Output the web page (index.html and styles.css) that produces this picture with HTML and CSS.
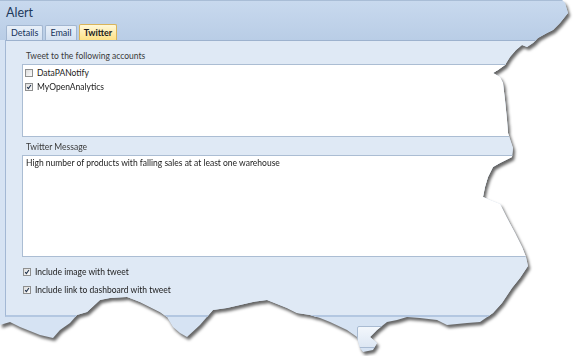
FILE: index.html
```html
<!doctype html>
<html>
<head>
<meta charset="utf-8">
<title>Alert</title>
<link rel="stylesheet" href="styles.css">
</head>
<body>
<div class="shot">
  <div class="window">
    <div class="head">
      <div class="title">Alert</div>
      <div class="tabs">
        <span class="tab">Details</span>
        <span class="tab">Email</span>
        <span class="tab on">Twitter</span>
      </div>
    </div>
    <div class="panel">
      <div class="label">Tweet to the following accounts</div>
      <div class="box list">
        <div class="item"><span class="check"></span>DataPANotify</div>
        <div class="item"><span class="check"><svg viewBox="0 0 8 8"><path d="M1.6 4.2 L3.2 6.2 L6.6 1.4"/></svg></span>MyOpenAnalytics</div>
      </div>
      <div class="label">Twitter Message</div>
      <div class="box msg">High number of products with falling sales at at least one warehouse</div>
      <div class="opts">
        <div class="item"><span class="check"><svg viewBox="0 0 8 8"><path d="M1.6 4.2 L3.2 6.2 L6.6 1.4"/></svg></span>Include image with tweet</div>
        <div class="item"><span class="check"><svg viewBox="0 0 8 8"><path d="M1.6 4.2 L3.2 6.2 L6.6 1.4"/></svg></span>Include link to dashboard with tweet</div>
      </div>
    </div>
    <div class="foot">
      <button class="btn">OK</button>
      <button class="btn">Cancel</button>
    </div>
  </div>
</div>
</body>
</html>
```

FILE: styles.css
```css
*{margin: 0;padding: 0;box-sizing: border-box;}
body{
	background: #FFFFFF;
	font-family: "Lato", "Noto Sans", sans-serif;
	font-size: 8.5px;
	color: #1b1b1b;
	overflow: hidden;
}
.shot{
	width: 573px;
	height: 356px;
	filter: drop-shadow(2px 3px 1.5px rgba(0,0,0,.6));
}
.window{
	width: 573px;
	height: 356px;
	background: #d6e3f3;
	clip-path: polygon(0 0, 562px 0, 565px 3px, 568px 13px, 560px 23px, 553px 30px, 547px 33px, 538px 38px, 533px 43px, 527px 47px, 522px 45px, 516px 50px, 510px 57px, 505px 65px, 498px 70px, 493px 73px, 500px 77px, 503px 83px, 505px 100px, 507px 120px, 508px 133px, 513px 148px, 512px 157px, 500px 163px, 493px 167px, 488px 177px, 485px 187px, 483px 197px, 490px 200px, 500px 204px, 507px 218px, 515px 233px, 522px 247px, 526px 257px, 528px 266px, 520px 278px, 512px 288px, 502px 303px, 493px 313px, 480px 322px, 467px 323px, 447px 325px, 437px 320px, 420px 318px, 407px 317px, 397px 320px, 387px 322px, 377px 330px, 370px 337px, 377px 343px, 373px 350px, 363px 352px, 360px 348px, 357px 337px, 347px 330px, 330px 322px, 320px 318px, 310px 315px, 297px 313px, 287px 308px, 267px 300px, 253px 302px, 240px 305px, 227px 308px, 213px 310px, 200px 325px, 187px 337px, 180px 333px, 173px 327px, 167px 317px, 160px 312px, 150px 307px, 140px 302px, 127px 297px, 110px 298px, 100px 300px, 87px 312px, 77px 315px, 70px 323px, 60px 330px, 53px 338px, 40px 335px, 20px 327px, 10px 322px, 0 325px);
}
.head{
	height: 40px;
	background: linear-gradient(#c8d9ee, #b9cde6);
	border-top: 1px solid #a9bdd6;
}
.title{
	height: 23px;
	line-height: 23px;
	padding-left: 6px;
	font-size: 12.5px;
	color: #1e395b;
}
.tabs{
	display: flex;
	align-items: flex-end;
	gap: 2px;
	height: 16px;
	padding-left: 6px;
}
.tab{
	height: 15px;
	line-height: 14px;
	padding: 0 4px;
	font-size: 9px;
	color: #15325a;
	background: linear-gradient(#e8f0f9, #d3e0f1);
	border: 1px solid #a2b6d0;
	border-bottom: none;
	border-radius: 2px 2px 0 0;
}
.tab.on{
	height: 16px;
	line-height: 15px;
	font-weight: bold;
	color: #1b1b1b;
	background: linear-gradient(#fff8d8, #fde185);
	border-color: #d9b45a;
}
.panel{
	height: 277px;
	margin-left: 5px;
	padding: 9px 0 0 16px;
	background: #dfe9f5;
	border-left: 1px solid #a3b8d4;
	border-top: 1px solid #9db2ce;
	border-bottom: 2px solid #b3c7e1;
}
.label{
	height: 12px;
	line-height: 12px;
	margin-bottom: 2px;
	padding-left: 4px;
	color: #3a3a3a;
}
.box{
	background: #FFFFFF;
	border: 1px solid #abbdd3;
	border-right: none;
}
.list{
	height: 73px;
	padding: 1px 0 0 2px;
	margin-bottom: 4px;
}
.msg{
	height: 102px;
	padding: 1px 0 0 3px;
	line-height: 12px;
}
.item{
	display: flex;
	align-items: center;
	height: 14px;
}
.check{
	width: 8px;
	height: 8px;
	margin-right: 4px;
	border: 1px solid #8e8f8f;
	background: linear-gradient(135deg, #dcdcdc, #fbfbfb);
}
.check svg{
	display: block;
	width: 6px;
	height: 6px;
	fill: none;
	stroke: #1d2f4a;
	stroke-width: 1.4;
}
.opts{
	margin-top: 6px;
	padding-left: 1px;
}
.opts .item{
	height: 18px;
}
.foot{
	display: flex;
	justify-content: flex-end;
	gap: 6px;
	padding: 9px 60px 0 0;
}
.btn{
	width: 75px;
	height: 22px;
	font-family: inherit;
	font-size: 9px;
	color: #1b1b1b;
	background: linear-gradient(#f3f7fc, #dde7f3);
	border: 1px solid #a9bbd2;
	border-radius: 2px;
}
```
